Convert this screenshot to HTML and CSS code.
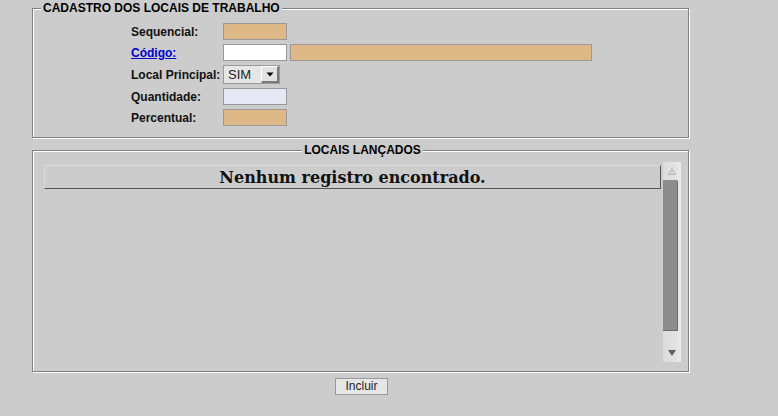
FILE: index.html
```html
<!DOCTYPE html>
<html lang="pt-BR">
<head>
<meta charset="utf-8">
<title>Cadastro dos Locais de Trabalho</title>
<link rel="stylesheet" href="styles.css">
</head>
<body>
<div class="page">
  <fieldset class="group group-cad">
    <legend class="legend">CADASTRO DOS LOCAIS DE TRABALHO</legend>
    <div class="form">
      <div class="row"><span class="label">Sequencial:</span><input class="field tan" type="text" readonly></div>
      <div class="row"><a class="label link" href="#">Código:</a><div class="pair"><input class="field white" type="text"><input class="field tan wide" type="text" readonly></div></div>
      <div class="row row-select"><span class="label">Local Principal:</span>
        <div class="select"><span class="select-text">SIM</span><span class="select-btn"><svg width="8" height="5" viewBox="0 0 8 5"><polygon points="0.5,0.5 7.5,0.5 4,4.5" fill="#000"/></svg></span></div>
      </div>
      <div class="row"><span class="label">Quantidade:</span><input class="field lav" type="text"></div>
      <div class="row"><span class="label">Percentual:</span><input class="field tan" type="text" readonly></div>
    </div>
  </fieldset>

  <fieldset class="group group-list">
    <legend class="legend legend-center">LOCAIS LANÇADOS</legend>
    <div class="scroller">
      <div class="scroll-content">
        <div class="thead">Nenhum registro encontrado.</div>
      </div>
      <div class="sbar">
        <div class="sbar-btn"><svg width="18" height="18" viewBox="0 0 18 18"><polygon points="5.5,12.5 9,6.5 12.5,12.5" fill="#d6d6d6" stroke="#b4b4b4" stroke-width="1"/></svg></div>
        <div class="sbar-thumb"></div>
        <div class="sbar-track"></div>
        <div class="sbar-btn"><svg width="18" height="18" viewBox="0 0 18 18"><polygon points="5,6 13,6 9,12" fill="#5e5e5e"/></svg></div>
      </div>
    </div>
  </fieldset>

  <div class="actions"><button class="btn" type="button">Incluir</button></div>
</div>
</body>
</html>
```
FILE: styles.css
```css
html, body {
  margin: 0;
  padding: 0;
}
body {
  background: #cccccc;
  font-family: "Liberation Sans", Arial, sans-serif;
  color: #111;
}
.page {
  width: 657px;
  margin-left: 32px;
}
.group {
  margin: 0;
  min-width: 0;
  border: 1px solid #808080;
  box-shadow: inset 1px 1px 0 #ffffff, 1px 1px 0 #ffffff;
}
.group-cad {
  padding: 5px 0 10px 0;
}
.group-list {
  margin-top: 4px;
  padding: 3px 7px 9px 11px;
}
.legend {
  margin-left: 8px;
  padding: 0 2px;
  font-size: 12px;
  font-weight: bold;
  line-height: 17px;
  color: #000;
  background: #cccccc;
}
.legend-center {
  margin-left: auto;
  margin-right: auto;
}
.form {
  margin-left: 98px;
  display: flex;
  flex-direction: column;
  gap: 2px;
}
.row {
  display: flex;
  align-items: center;
  height: 19px;
}
.row-select {
  height: 21px;
}
.label {
  width: 92px;
  flex: none;
  font-size: 12px;
  font-weight: bold;
  color: #111;
}
.link {
  color: #0000cc;
  text-decoration: underline;
}
.pair {
  display: flex;
  gap: 3px;
}
.field {
  box-sizing: border-box;
  width: 64px;
  height: 17px;
  margin: 0;
  padding: 0 2px;
  border: 1px solid #999999;
  outline: none;
  font: 12px "Liberation Sans", Arial, sans-serif;
}
.tan { background: #deb887; }
.white { background: #ffffff; }
.lav { background: #e6e6f4; }
.wide { width: 302px; }
.select {
  box-sizing: border-box;
  width: 57px;
  height: 19px;
  display: flex;
  border: 1px solid #9a9a9a;
  background: #e6e6e6;
}
.select-text {
  flex: 1;
  padding-left: 4px;
  font-size: 13px;
  line-height: 17px;
  color: #222;
}
.select-btn {
  box-sizing: border-box;
  width: 18px;
  height: 17px;
  display: flex;
  align-items: center;
  justify-content: center;
  background: #e2e2e2;
  border-top: 1px solid #ffffff;
  border-left: 1px solid #ffffff;
  border-right: 2px solid #7a7a7a;
  border-bottom: 2px solid #7a7a7a;
}
.scroller {
  height: 200px;
  display: flex;
}
.scroll-content {
  flex: 1;
  padding-top: 3px;
}
.thead {
  box-sizing: border-box;
  width: 617px;
  height: 24px;
  padding-top: 1px;
  border-top: 1px solid #dadada;
  border-left: 1px solid #dadada;
  border-right: 1px solid #555555;
  border-bottom: 1px solid #555555;
  font-family: "DejaVu Serif", serif;
  font-weight: bold;
  font-size: 16px;
  line-height: 21px;
  text-align: center;
  color: #111;
}
.sbar {
  width: 18px;
  display: flex;
  flex-direction: column;
  background: linear-gradient(to right, #dcdcdc, #e2e2e2 70%, #ebebeb);
}
.sbar-btn {
  height: 18px;
  flex: none;
}
.sbar-btn svg {
  display: block;
}
.sbar-thumb {
  box-sizing: border-box;
  width: 15px;
  height: 151px;
  flex: none;
  background: #8c8c8c;
  border-right: 1px solid #6c6c6c;
  border-bottom: 1px solid #6c6c6c;
  border-top-right-radius: 2px;
}
.sbar-track {
  flex: 1;
}
.actions {
  margin-top: 4px;
  padding-left: 2px;
  text-align: center;
}
.btn {
  box-sizing: border-box;
  width: 53px;
  height: 17px;
  margin: 0;
  padding: 0;
  border: 1px solid #999999;
  background: #e6e6e6;
  font: 12px "Liberation Sans", Arial, sans-serif;
  color: #222;
  line-height: 15px;
}
```
